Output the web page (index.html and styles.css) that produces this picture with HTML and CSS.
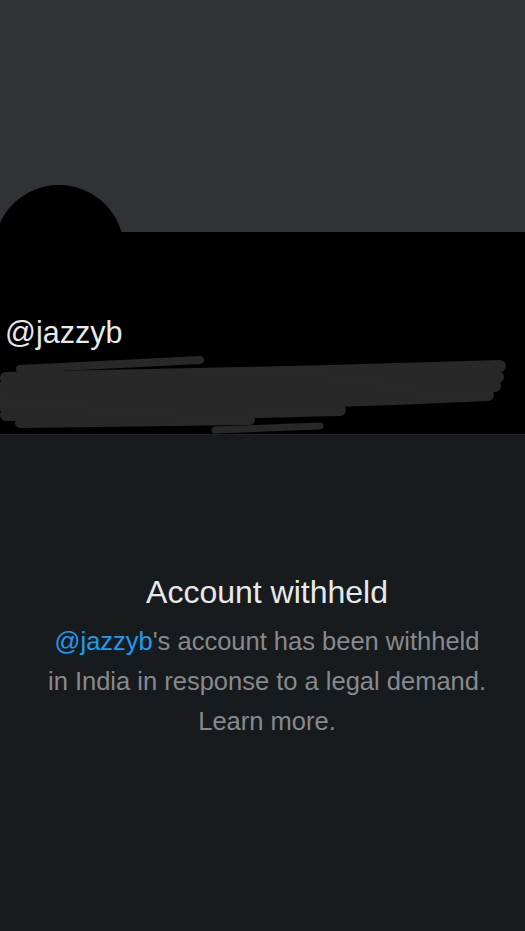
FILE: index.html
```html
<!DOCTYPE html>
<html lang="en">
<head>
<meta charset="utf-8">
<title>Account withheld</title>
<link rel="stylesheet" href="styles.css">
</head>
<body>
<div class="page">
  <div class="banner"></div>
  <div class="profile">
    <div class="avatar"></div>
    <div class="handle">@jazzyb</div>
    <svg class="redact" width="525" height="84" viewBox="0 0 525 84" aria-hidden="true">
      <g fill="none" stroke="#282828" stroke-linecap="round" stroke-linejoin="round">
        <path d="M20 17 L200 8" stroke-width="8"/>
        <path d="M6 26 L240 21 L330 19 L500 14" stroke-width="12"/>
        <path d="M4 35 L330 30 L498 25" stroke-width="12"/>
        <path d="M3 45 L320 40 L495 34" stroke-width="12"/>
        <path d="M4 54 L300 50 L395 47 L488 43" stroke-width="12"/>
        <path d="M6 63 L260 60 L340 58" stroke-width="12"/>
        <path d="M20 71 L250 68" stroke-width="10"/>
        <path d="M215 78 L320 74" stroke-width="7"/>
      </g>
    </svg>
  </div>
  <div class="notice">
    <h1 class="title">Account withheld</h1>
    <p class="message"><span class="mention">@jazzyb</span>'s account has been withheld in India in response to a legal demand. Learn more.</p>
  </div>
</div>
</body>
</html>
```

FILE: styles.css
```css
* { box-sizing: border-box; }
html, body {
  margin: 0;
  padding: 0;
  background: #171b1e;
}
body {
  font-family: "Liberation Sans", Arial, sans-serif;
  width: 525px;
  height: 931px;
  overflow: hidden;
}
.page {
  display: flex;
  flex-direction: column;
  min-height: 931px;
}
.banner {
  height: 232px;
  background: #2f3336;
}
.profile {
  position: relative;
  height: 203px;
  background: #000;
  border-bottom: 1px solid #1f2326;
  padding-top: 82px;
}
.avatar {
  position: absolute;
  left: -6px;
  top: -47px;
  width: 130px;
  height: 130px;
  border-radius: 50%;
  background: #000;
}
.handle {
  position: relative;
  margin: 0 0 0 5px;
  font-size: 30.5px;
  line-height: 36px;
  color: #e7e9ea;
}
.redact {
  display: block;
  position: relative;
  margin-top: 2px;
}
.notice {
  flex: 1;
  background: #171b1e;
  padding: 139px 0 0 9px;
  display: flex;
  flex-direction: column;
  align-items: center;
  text-align: center;
}
.title {
  margin: 0;
  font-size: 32px;
  line-height: 36px;
  font-weight: 400;
  color: #e7e9ea;
}
.message {
  margin: 11px 0 0;
  max-width: 450px;
  font-size: 25.5px;
  line-height: 40px;
  color: #878a8d;
}
.mention {
  color: #1d9bf0;
}
```
